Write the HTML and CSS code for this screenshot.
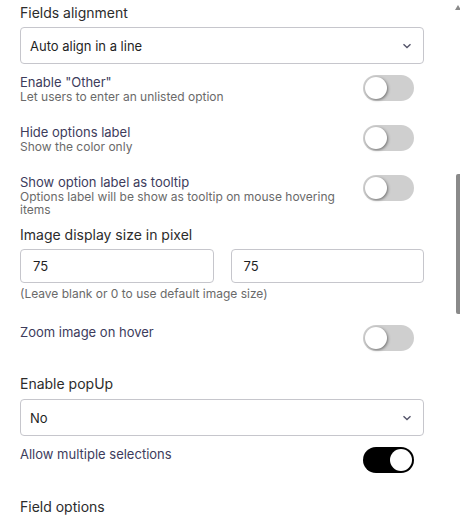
FILE: index.html
```html
<!DOCTYPE html>
<html lang="en">
<head>
    <meta charset="UTF-8">
    <title>Field settings</title>
    <link rel="stylesheet" href="styles.css">
</head>
<body>
    <div class="panel">
        <div class="field">
            <div class="label">Fields alignment</div>
            <div class="select">
                <span>Auto align in a line</span>
                <svg class="caret" width="10" height="6" viewBox="0 0 10 6"><path d="M1.5 1.2 L5 4.5 L8.5 1.2" fill="none" stroke="#55556a" stroke-width="1.4"/></svg>
            </div>
        </div>

        <div class="toggle-row row-other">
            <div class="toggle-text">
                <div class="toggle-label">Enable "Other"</div>
                <div class="hint">Let users to enter an unlisted option</div>
            </div>
            <span class="switch"></span>
        </div>

        <div class="toggle-row row-hide">
            <div class="toggle-text">
                <div class="toggle-label">Hide options label</div>
                <div class="hint">Show the color only</div>
            </div>
            <span class="switch"></span>
        </div>

        <div class="toggle-row row-tooltip">
            <div class="toggle-text">
                <div class="toggle-label">Show option label as tooltip</div>
                <div class="hint">Options label will be show as tooltip on mouse hovering items</div>
            </div>
            <span class="switch"></span>
        </div>

        <div class="field field-size">
            <div class="label">Image display size in pixel</div>
            <div class="pair">
                <div class="input">75</div>
                <div class="input">75</div>
            </div>
            <div class="hint note">(Leave blank or 0 to use default image size)</div>
        </div>

        <div class="toggle-row row-zoom">
            <div class="toggle-text">
                <div class="toggle-label">Zoom image on hover</div>
            </div>
            <span class="switch"></span>
        </div>

        <div class="field field-popup">
            <div class="label">Enable popUp</div>
            <div class="select">
                <span>No</span>
                <svg class="caret" width="10" height="6" viewBox="0 0 10 6"><path d="M1.5 1.2 L5 4.5 L8.5 1.2" fill="none" stroke="#55556a" stroke-width="1.4"/></svg>
            </div>
        </div>

        <div class="toggle-row row-multi">
            <div class="toggle-text">
                <div class="toggle-label">Allow multiple selections</div>
            </div>
            <span class="switch on"></span>
        </div>

        <div class="label field-options">Field options</div>
    </div>

    <div class="scroll-arrow"></div>
    <div class="scroll-thumb"></div>
</body>
</html>
```

FILE: styles.css
```css
body {
    margin: 0;
    background: #fff;
    font-family: Inter, "Noto Sans", sans-serif;
    color: #2b2b2b;
}

.panel {
    width: 404px;
    padding: 4px 0 0 20px;
}

.label {
    font-size: 14px;
    line-height: 18px;
    color: #2c2c2c;
}

.field .label {
    margin-bottom: 5px;
}

.select {
    height: 37px;
    box-sizing: border-box;
    border: 1px solid #c6c6cc;
    border-radius: 4px;
    display: flex;
    align-items: center;
    justify-content: space-between;
    padding: 0 11px 0 9px;
    font-size: 13px;
    color: #1f1f1f;
}

.caret {
    display: block;
}

.toggle-row {
    display: flex;
    justify-content: space-between;
    align-items: flex-start;
    padding-right: 10px;
}

.toggle-label {
    font-size: 13px;
    line-height: 16px;
    color: #3d3c5c;
}

.hint {
    font-size: 12px;
    line-height: 13px;
    color: #6a6a6a;
}

.toggle-text {
    width: 330px;
}

.switch {
    flex: none;
    width: 51px;
    height: 26px;
    margin-top: 1px;
    border-radius: 13px;
    background: #cfcfcf;
    position: relative;
}

.switch::after {
    content: "";
    position: absolute;
    top: 2px;
    left: 2px;
    width: 22px;
    height: 22px;
    border-radius: 50%;
    background: #fff;
    box-shadow: 1px 1px 3px rgba(0, 0, 0, 0.45);
}

.switch.on {
    background: #000;
}

.switch.on::after {
    left: 27px;
    box-shadow: none;
}

.row-other {
    margin-top: 10px;
}

.row-other .switch {
    margin-top: 1px;
}

.row-hide {
    margin-top: 21px;
}

.row-tooltip {
    margin-top: 21px;
}

.field-size {
    margin-top: 10px;
}

.pair {
    display: grid;
    grid-template-columns: 1fr 1fr;
    gap: 17px;
}

.input {
    height: 34px;
    box-sizing: border-box;
    border: 1px solid #c6c6cc;
    border-radius: 4px;
    padding: 0 12px;
    display: flex;
    align-items: center;
    font-size: 13px;
    color: #1f1f1f;
}

.note {
    margin-top: 4px;
}

.row-zoom {
    margin-top: 24px;
}

.field-popup {
    margin-top: 24px;
}

.field-popup .label {
    margin-bottom: 6px;
}

.row-multi {
    margin-top: 10px;
}

.field-options {
    margin-top: 25px;
}

.scroll-arrow {
    position: absolute;
    top: 5px;
    left: 455px;
    width: 0;
    height: 0;
    border-left: 3px solid transparent;
    border-right: 3px solid transparent;
    border-bottom: 5px solid #8a8a8a;
}

.scroll-thumb {
    position: absolute;
    top: 174px;
    left: 456px;
    width: 4px;
    height: 140px;
    border-radius: 2px 0 0 2px;
    background: #8a8a8a;
}
```
